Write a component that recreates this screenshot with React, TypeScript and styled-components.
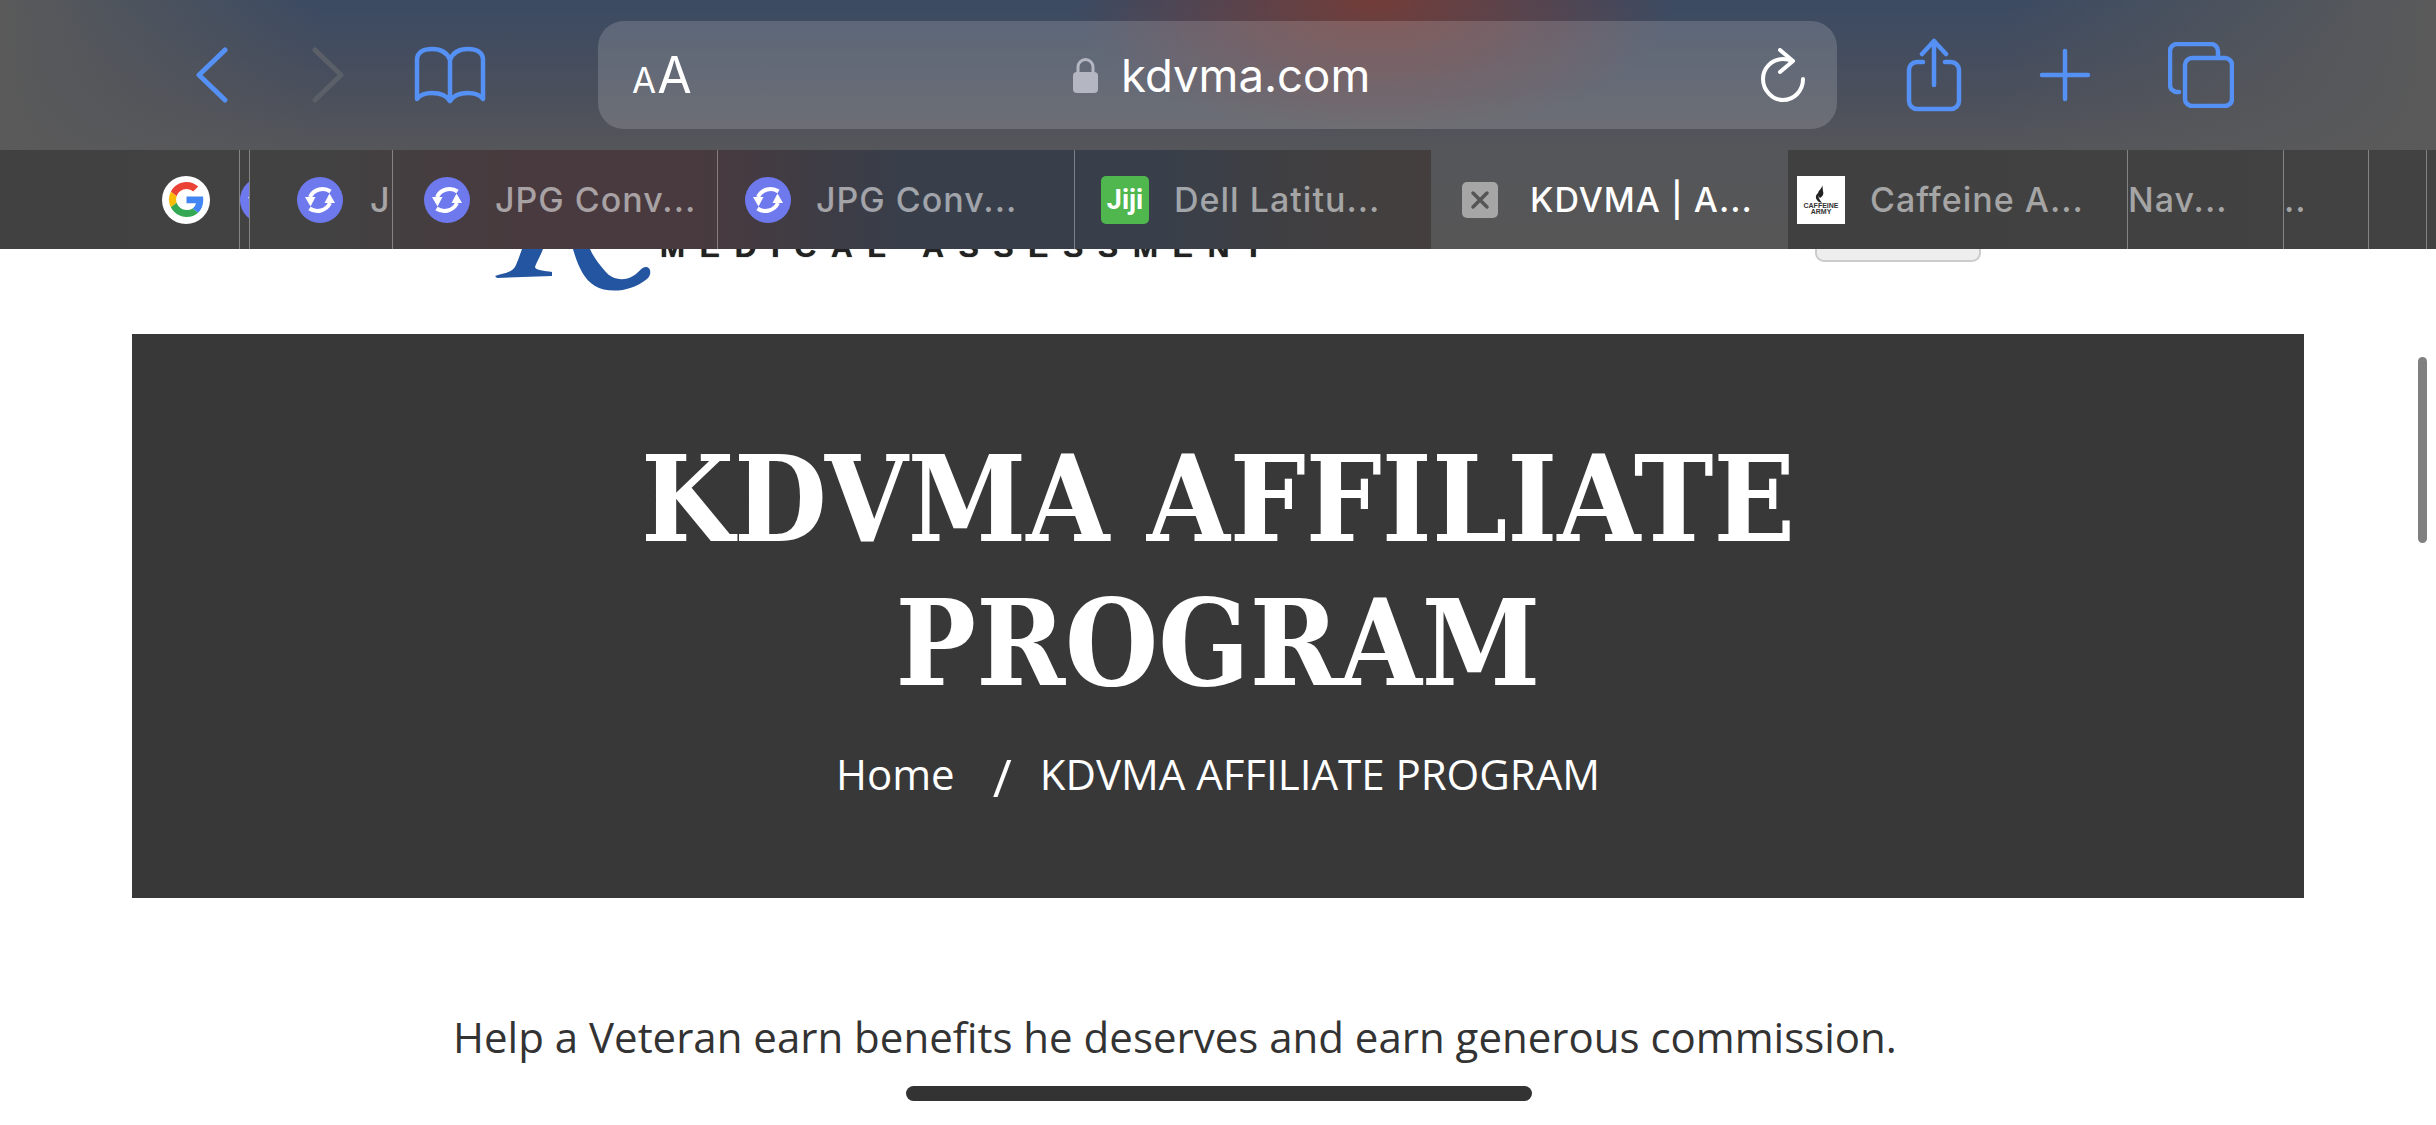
import React from 'react';
import styled, { createGlobalStyle } from 'styled-components';

const GlobalStyle = createGlobalStyle`
  html, body {
    margin: 0;
    padding: 0;
    background: #fff;
    overflow: hidden;
  }
`;

const blue = '#5590f5';

const tabBackdrop = `linear-gradient(90deg, #414141 0, #424242 320px, #483a3e 520px, #483a3e 700px, #383e4a 900px, #383f4b 1150px, #403f41 1300px, #443f3e 1420px, #404041 1800px, #424242 2436px) fixed`;

const Screen = styled.div`
  position: relative;
  width: 2436px;
  height: 1125px;
  overflow: hidden;
  background: #fff;
`;

const Chrome = styled.header`
  display: flex;
  flex-direction: column;
  height: 249px;
  background:
    radial-gradient(ellipse 300px 135px at 1375px 0, rgba(118, 60, 54, 0.95), rgba(118, 60, 54, 0) 100%),
    linear-gradient(90deg, #5a5a5a 0, rgba(90, 90, 90, 0) 320px, rgba(90, 90, 90, 0) 2000px, #5a5a5a 2436px),
    linear-gradient(180deg, #3b4a62 0, #4a4f5c 90px, #55565a 150px, #565656 249px);
`;

const Toolbar = styled.div`
  display: flex;
  align-items: center;
  height: 150px;
  box-sizing: border-box;
  padding-left: 196px;
`;

const ToolIcon = styled.svg<{ $w: number; $h: number; $after: number }>`
  display: block;
  flex: none;
  width: ${(p) => p.$w}px;
  height: ${(p) => p.$h}px;
  margin-right: ${(p) => p.$after}px;
  fill: none;
  stroke-linecap: round;
  stroke-linejoin: round;
`;

const AddressBar = styled.div`
  display: flex;
  align-items: center;
  flex: none;
  box-sizing: border-box;
  width: 1239px;
  height: 108px;
  margin-right: 69px;
  padding: 0 32px 0 34px;
  border-radius: 26px;
  background: rgba(255, 255, 255, 0.16);
  color: #fff;
  font-family: Inter, sans-serif;
`;

const TextSize = styled.div`
  display: flex;
  align-items: baseline;
  width: 441px;
  line-height: 1;
`;

const SmallA = styled.span`
  font-size: 35px;
  margin-right: 1px;
`;

const BigA = styled.span`
  font-size: 50px;
`;

const Domain = styled.div`
  display: flex;
  align-items: center;
  flex: 1;
  font-size: 45.5px;
`;

const LockIcon = styled.svg`
  display: block;
  width: 25px;
  height: 36px;
  margin-right: 23px;
`;

const TabRow = styled.nav`
  display: flex;
  height: 99px;
`;

const Tab = styled.div<{ $w: number; $pad?: number; $active?: boolean; $divider?: boolean }>`
  display: flex;
  align-items: center;
  flex: none;
  overflow: hidden;
  box-sizing: border-box;
  width: ${(p) => p.$w}px;
  padding-left: ${(p) => p.$pad ?? 0}px;
  background: ${(p) => (p.$active ? 'transparent' : tabBackdrop)};
  border-left: ${(p) => (p.$divider ? '1px solid rgba(255, 255, 255, 0.35)' : 'none')};
`;

const TabTitle = styled.span<{ $active?: boolean; $left?: number }>`
  margin-left: ${(p) => p.$left ?? 0}px;
  font-family: Inter, sans-serif;
  font-size: 34px;
  font-weight: 500;
  letter-spacing: 1px;
  white-space: nowrap;
  color: ${(p) => (p.$active ? '#fff' : 'rgba(255, 255, 255, 0.53)')};
`;

const Favicon = styled.svg<{ $size?: number }>`
  display: block;
  flex: none;
  width: ${(p) => p.$size ?? 46}px;
  height: ${(p) => p.$size ?? 46}px;
`;

const GoogleBadge = styled.div`
  display: flex;
  align-items: center;
  justify-content: center;
  flex: none;
  width: 48px;
  height: 48px;
  border-radius: 50%;
  background: #fff;
`;

const JijiBadge = styled.div`
  display: flex;
  align-items: center;
  justify-content: center;
  flex: none;
  width: 48px;
  height: 48px;
  border-radius: 5px;
  background: #50b74f;
  color: #fff;
  font-family: Roboto, sans-serif;
  font-size: 27px;
  font-weight: 700;
`;

const CloseBadge = styled.div`
  display: flex;
  align-items: center;
  justify-content: center;
  flex: none;
  width: 36px;
  height: 36px;
  border-radius: 5px;
  background: #a6a6a6;
`;

const CaffeineBadge = styled.div`
  display: flex;
  flex-direction: column;
  align-items: center;
  justify-content: center;
  flex: none;
  width: 48px;
  height: 48px;
  margin-left: 9px;
  background: #fff;
  color: #333;
  font-family: 'Liberation Sans', sans-serif;
  font-size: 7px;
  font-weight: 700;
  line-height: 6px;
`;

const PageHead = styled.div`
  display: flex;
  align-items: flex-start;
  height: 85px;
  padding-left: 495px;
  overflow: hidden;
`;

const LogoMark = styled.svg`
  display: block;
  flex: none;
  width: 160px;
  height: 45px;
`;

const LogoText = styled.div`
  margin: -18px 0 0 5px;
  font-family: 'Liberation Sans', sans-serif;
  font-size: 30px;
  font-weight: 700;
  line-height: 32px;
  letter-spacing: 14.85px;
  white-space: nowrap;
  color: #222;
  text-shadow: 0 0 1px #222;
`;

const MenuButton = styled.div`
  box-sizing: border-box;
  flex: none;
  width: 166px;
  height: 13px;
  margin-left: 538px;
  background: #eee;
  border: 2px solid #ccc;
  border-top: none;
  border-radius: 0 0 9px 9px;
`;

const Hero = styled.section`
  display: flex;
  flex-direction: column;
  align-items: center;
  box-sizing: border-box;
  width: 2172px;
  height: 564px;
  margin-left: 132px;
  padding-top: 93px;
  background: #383838;
  color: #fff;
`;

const HeroTitle = styled.h1`
  margin: 0;
  width: 1300px;
  font-family: 'DejaVu Serif Condensed', 'DejaVu Serif', serif;
  font-size: 119px;
  font-weight: 700;
  line-height: 144px;
  text-align: center;
`;

const Breadcrumb = styled.div`
  display: flex;
  align-items: center;
  margin-top: 30px;
  font-family: 'Open Sans', sans-serif;
  font-size: 42px;
  line-height: 58px;
`;

const Slash = styled.span`
  margin: 0 28px 0 38px;
  position: relative;
  top: 3px;
  font-size: 52px;
`;

const Intro = styled.p`
  margin: 110px 0 0 453px;
  font-family: 'Open Sans', sans-serif;
  font-size: 42px;
  line-height: 58px;
  color: #333;
  white-space: nowrap;
`;

const ScrollThumb = styled.div`
  position: absolute;
  left: 2418px;
  top: 357px;
  width: 9px;
  height: 186px;
  border-radius: 5px;
  background: #808080;
`;

const HomeIndicator = styled.div`
  position: absolute;
  left: 906px;
  top: 1086px;
  width: 626px;
  height: 15px;
  border-radius: 8px;
  background: #333;
`;

function SyncIcon() {
  return (
    <Favicon viewBox="0 0 46 46">
      <circle cx="23" cy="23" r="23" fill="#6f79ee" />
      <path d="M33.5 14.5A14 14 0 0 0 13 20" fill="none" stroke="#fff" strokeWidth="4" />
      <path d="M12.5 31.5A14 14 0 0 0 33 26" fill="none" stroke="#fff" strokeWidth="4" />
      <path d="M8 20h10.5l-5 9.5zM38 26H27.5l5-9.5z" fill="#fff" />
    </Favicon>
  );
}

function GoogleIcon() {
  return (
    <GoogleBadge>
      <Favicon $size={35} viewBox="0 0 48 48">
        <path fill="#EA4335" d="M24 9.5c3.54 0 6.71 1.22 9.21 3.6l6.85-6.85C35.9 2.38 30.47 0 24 0 14.62 0 6.51 5.38 2.56 13.22l7.98 6.19C12.43 13.72 17.74 9.5 24 9.5z" />
        <path fill="#4285F4" d="M46.98 24.55c0-1.57-.15-3.09-.38-4.55H24v9.02h12.94c-.58 2.96-2.26 5.48-4.78 7.18l7.73 6c4.51-4.18 7.09-10.36 7.09-17.65z" />
        <path fill="#FBBC05" d="M10.53 28.59c-.48-1.45-.76-2.99-.76-4.59s.27-3.14.76-4.59l-7.98-6.19C.92 16.46 0 20.12 0 24c0 3.88.92 7.54 2.56 10.78l7.97-6.19z" />
        <path fill="#34A853" d="M24 48c6.48 0 11.93-2.13 15.89-5.81l-7.73-6c-2.15 1.45-4.92 2.3-8.16 2.3-6.26 0-11.57-4.22-13.47-9.91l-7.98 6.19C6.51 42.62 14.62 48 24 48z" />
      </Favicon>
    </GoogleBadge>
  );
}

function CaffeineIcon() {
  return (
    <CaffeineBadge>
      <svg width="12" height="18" viewBox="0 0 12 18">
        <path d="M7 0c1 3-4 5-4 9 0 2 1 3 2 4 3-2 4-4 3-7C7.500 4 8 2 7 0zM3 8C1 10 0 12 2 15c1 2 3 2 5 3-1-2-4-4-4-10z" fill="#222" />
      </svg>
      <span>CAFFEINE</span>
      <span>ARMY</span>
    </CaffeineBadge>
  );
}

export default function App() {
  return (
    <Screen>
      <GlobalStyle />
      <Chrome>
        <Toolbar>
          <ToolIcon $w={32} $h={56} $after={84} viewBox="0 0 32 56" stroke={blue} strokeWidth="5">
            <path d="M29 3L3 28l26 25" />
          </ToolIcon>
          <ToolIcon $w={32} $h={56} $after={70} viewBox="0 0 32 56" stroke="#5b6068" strokeWidth="5">
            <path d="M3 3l26 25L3 53" />
          </ToolIcon>
          <ToolIcon $w={72} $h={58} $after={112} viewBox="0 0 72 58" stroke={blue} strokeWidth="4.500">
            <path d="M36 54V14C33 6 27 3 18 3 10 3 3 6 3 14v39c3-4 8-6 15-6 8 0 15 3 18 8 3-5 10-8 18-8 7 0 12 2 15 6V14C69 6 62 3 54 3c-9 0-15 3-18 11" />
          </ToolIcon>
          <AddressBar>
            <TextSize>
              <SmallA>A</SmallA>
              <BigA>A</BigA>
            </TextSize>
            <Domain>
              <LockIcon viewBox="0 0 25 36">
                <path d="M5 16V10a7.500 7.500 0 0 1 15 0v6" fill="none" stroke="#b4b7c2" strokeWidth="3" />
                <rect x="0" y="15" width="25" height="21" rx="4" fill="#b4b7c2" />
              </LockIcon>
              kdvma.com
            </Domain>
            <ToolIcon $w={44} $h={54} $after={0} viewBox="0 0 44 54" stroke="#fff" strokeWidth="4">
              <path d="M31 13C28 11.500 25 11 22 11 11 11 2 20 2 31s9 21 20 21 20-9 20-21" />
              <path d="M19 2l13 11-13 11" />
            </ToolIcon>
          </AddressBar>
          <ToolIcon $w={56} $h={74} $after={77} viewBox="0 0 56 74" stroke={blue} strokeWidth="4.500">
            <path d="M17 24H11a8 8 0 0 0-8 8v31a8 8 0 0 0 8 8h34a8 8 0 0 0 8-8V32a8 8 0 0 0-8-8h-6" />
            <path d="M28 47V3M16 16L28 3l12 13" />
          </ToolIcon>
          <ToolIcon $w={52} $h={54} $after={77} viewBox="0 0 52 54" stroke={blue} strokeWidth="4.500">
            <path d="M26 3v48M3 27h46" />
          </ToolIcon>
          <ToolIcon $w={66} $h={66} $after={0} viewBox="0 0 66 66" stroke={blue} strokeWidth="4.500">
            <path d="M11 50H9a7 7 0 0 1-7-7V9a7 7 0 0 1 7-7h34a7 7 0 0 1 7 7v7" />
            <rect x="17" y="16" width="47" height="48" rx="7" />
          </ToolIcon>
        </Toolbar>
        <TabRow>
          <Tab $w={239} $pad={162}>
            <GoogleIcon />
          </Tab>
          <Tab $w={10} $divider>
            <SyncIcon />
          </Tab>
          <Tab $w={143} $pad={47} $divider>
            <SyncIcon />
            <TabTitle $left={27}>JPG Conv...</TabTitle>
          </Tab>
          <Tab $w={325} $pad={31} $divider>
            <SyncIcon />
            <TabTitle $left={25}>JPG Conv...</TabTitle>
          </Tab>
          <Tab $w={357} $pad={27} $divider>
            <SyncIcon />
            <TabTitle $left={25}>JPG Conv...</TabTitle>
          </Tab>
          <Tab $w={357} $pad={26} $divider>
            <JijiBadge>Jiji</JijiBadge>
            <TabTitle $left={25}>Dell Latitu...</TabTitle>
          </Tab>
          <Tab $w={357} $pad={31} $active>
            <CloseBadge>
              <Favicon $size={20} viewBox="0 0 20 20">
                <path d="M3 3l14 14M17 3L3 17" stroke="#555" strokeWidth="3.500" strokeLinecap="round" />
              </Favicon>
            </CloseBadge>
            <TabTitle $active $left={32}>KDVMA | A...</TabTitle>
          </Tab>
          <Tab $w={339}>
            <CaffeineIcon />
            <TabTitle $left={25}>Caffeine A...</TabTitle>
          </Tab>
          <Tab $w={156} $divider>
            <TabTitle>Nav...</TabTitle>
          </Tab>
          <Tab $w={85} $divider>
            <TabTitle>..</TabTitle>
          </Tab>
          <Tab $w={58} $divider />
          <Tab $w={10} $divider />
        </TabRow>
      </Chrome>
      <PageHead>
        <LogoMark viewBox="0 0 160 45">
          <path d="M27 0H48C45 8 41 14 40 18 40 21 50 22 57 23V27L2 29 0 27C8 24 18 24 21 16 23 11 25 6 27 0z" fill="#2355a0" />
          <path d="M78 0C82 14 88 30 100 37 112 44 135 44 152 30 157 26 156 18 151 18 146 18 144 24 138 27 128 33 116 30 110 22 103 14 98 7 95 0z" fill="#2355a0" />
        </LogoMark>
        <LogoText>MEDICAL ASSESSMENT</LogoText>
        <MenuButton />
      </PageHead>
      <Hero>
        <HeroTitle>KDVMA AFFILIATE PROGRAM</HeroTitle>
        <Breadcrumb>
          <span>Home</span>
          <Slash>/</Slash>
          <span>KDVMA AFFILIATE PROGRAM</span>
        </Breadcrumb>
      </Hero>
      <Intro>Help a Veteran earn benefits he deserves and earn generous commission.</Intro>
      <ScrollThumb />
      <HomeIndicator />
    </Screen>
  );
}
